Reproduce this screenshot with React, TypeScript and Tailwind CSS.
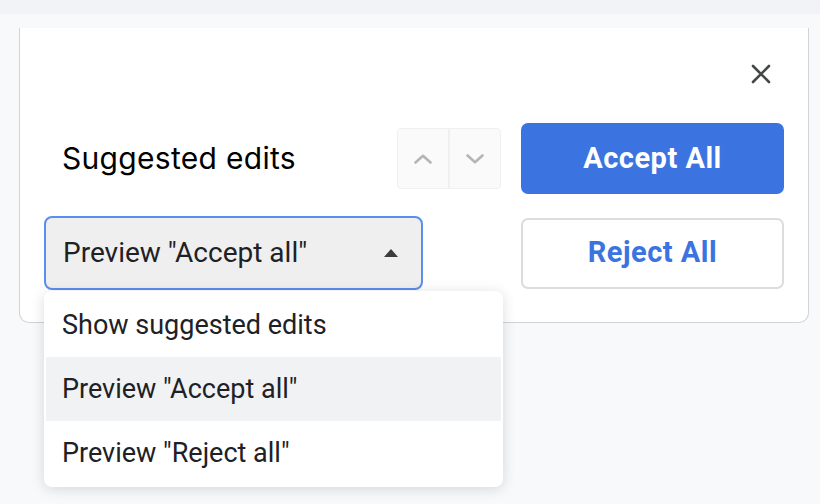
import React from 'react';

const ChevronUp = () => (
  <svg width="18" height="10" viewBox="0 0 18 10" fill="none">
    <path d="M1.5 8.5L9 1.8l7.5 6.7" stroke="#b5b5b5" strokeWidth="2.6" strokeLinecap="round" strokeLinejoin="round" />
  </svg>
);

const ChevronDown = () => (
  <svg width="18" height="10" viewBox="0 0 18 10" fill="none">
    <path d="M1.5 1.5L9 8.2l7.5-6.7" stroke="#b5b5b5" strokeWidth="2.6" strokeLinecap="round" strokeLinejoin="round" />
  </svg>
);

const CloseIcon = () => (
  <svg width="20" height="20" viewBox="0 0 20 20" fill="none">
    <path d="M2 2l16 16M18 2L2 18" stroke="#444746" strokeWidth="2.6" strokeLinecap="round" />
  </svg>
);

const menuItems = ['Show suggested edits', 'Preview "Accept all"', 'Preview "Reject all"'];

const App = () => {
  const selected = 1;

  return (
    <div className="w-[820px] h-[504px] overflow-hidden bg-[#f8f9fb] font-['Roboto',sans-serif]">
      <div className="h-[14px] bg-[#f1f3f7]"></div>
      <div className="h-[14px]"></div>

      {/* Panel */}
      <div className="ml-[19px] w-[790px] bg-white border-x border-b border-[#d3d3d6] rounded-b-[10px] px-[24px] pb-[32px]">
        <div className="flex justify-end pt-[36px] pr-[13px]">
          <button className="w-[20px] h-[20px] flex items-center justify-center">
            <CloseIcon />
          </button>
        </div>

        <div className="mt-[39px] flex items-center h-[71px]">
          <div className="flex-1 pl-[18px] text-[30px] text-black font-['Inter',sans-serif] tracking-[0.3px]">
            Suggested edits
          </div>
          <div className="flex w-[104px] h-[61px] rounded-[4px] border border-[#f0f0f0] bg-[#fafafa] overflow-hidden">
            <button className="flex-1 flex items-center justify-center border-r-2 border-[#f0f0f0]">
              <ChevronUp />
            </button>
            <button className="flex-1 flex items-center justify-center">
              <ChevronDown />
            </button>
          </div>
          <button className="ml-[20px] w-[263px] h-[71px] rounded-[7px] bg-[#3b74e0] text-white text-[29px] font-bold tracking-[0.5px]">
            Accept All
          </button>
        </div>

        <div className="mt-[22px] flex items-center">
          <div className="relative">
            <div className="w-[379px] h-[74px] rounded-[8px] border-2 border-[#5b8def] bg-[#efefef] flex items-center justify-between pl-[17px] pr-[23px]">
              <span className="text-[28px] text-[#202124]">Preview "Accept all"</span>
              <svg width="14" height="8" viewBox="0 0 14 8">
                <path d="M0 8L7 0l7 8z" fill="#3c3c3c" />
              </svg>
            </div>

            {/* Dropdown menu */}
            <div className="absolute left-0 top-[75px] w-[459px] p-[2px] bg-white rounded-[8px] shadow-[0_2px_14px_rgba(0,0,0,0.14)] z-10">
              {menuItems.map((item, i) => (
                <div
                  key={i}
                  className={`h-[64px] flex items-center pl-[16px] text-[27px] text-[#202124] ${i === selected ? 'bg-[#f1f2f4]' : ''}`}
                >
                  {item}
                </div>
              ))}
            </div>
          </div>
          <div className="flex-1"></div>
          <button className="w-[263px] h-[71px] rounded-[7px] border-2 border-[#dadce0] bg-white text-[#3b74e0] text-[29px] font-bold tracking-[0.5px]">
            Reject All
          </button>
        </div>
      </div>
    </div>
  );
};

export default App;
